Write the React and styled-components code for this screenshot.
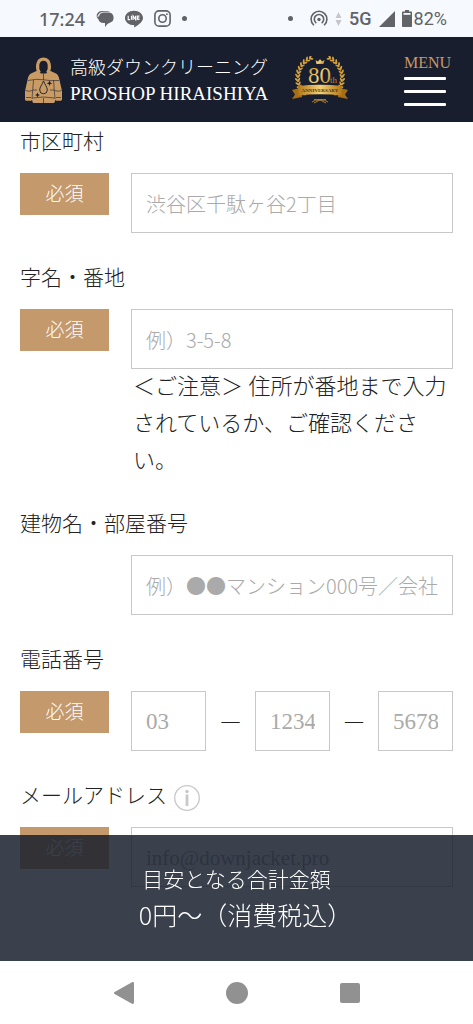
import React from "react";
import styled, { createGlobalStyle } from "styled-components";

const serif = `"Liberation Serif", "Noto Sans CJK JP", serif`;
const gothic = `"Noto Sans CJK JP", sans-serif`;
const navy = "#181e2d";
const tan = "#c4996c";

const GlobalStyle = createGlobalStyle`
  *, *::before, *::after { box-sizing: border-box; }
  body {
    margin: 0;
    background: #fff;
    color: #222;
    font-family: ${serif};
    font-weight: 300;
  }
`;

const Page = styled.div`
  min-height: 100vh;
  display: flex;
  flex-direction: column;
`;

const StatusBar = styled.div`
  height: 37px;
  padding: 0 26px 0 39px;
  display: flex;
  align-items: center;
  justify-content: space-between;
  background: #f6f9fe;
  color: #626366;
  font-family: "Noto Sans", sans-serif;
  font-weight: 500;
  font-size: 18px;
  line-height: 24px;
`;

const StatusGroup = styled.div`
  display: flex;
  align-items: center;
  gap: ${(p) => p.$gap}px;
  svg { display: block; }
`;

const Network = styled.span`
  font-family: Roboto, sans-serif;
  font-weight: 500;
`;

const Battery = styled.span`
  display: flex;
  align-items: center;
  gap: 2px;
  font-family: Roboto, sans-serif;
  font-weight: 400;
`;

const Dot = styled.span`
  width: 5px;
  height: 5px;
  margin-right: ${(p) => p.$after || 0}px;
  border-radius: 50%;
  background: currentColor;
`;

const Header = styled.header`
  height: 85px;
  padding: 0 22px 0 24px;
  display: flex;
  align-items: center;
  justify-content: space-between;
  background: ${navy};
`;

const Brand = styled.a`
  display: flex;
  align-items: center;
  gap: 7px;
  color: #fff;
  text-decoration: none;
  white-space: nowrap;
  svg { display: block; }
`;

const BrandText = styled.span`
  padding-top: 2px;
  display: flex;
  flex-direction: column;
`;

const BrandLine = styled.span`
  font-size: ${(p) => p.$size}px;
  line-height: 26px;
`;

const BrandGroup = styled.div`
  display: flex;
  align-items: center;
  gap: 24px;
  svg { display: block; }
`;

const MenuButton = styled.button`
  width: 47px;
  padding: 0;
  border: 0;
  background: none;
  color: ${tan};
  font-family: ${serif};
  font-size: 16px;
  line-height: 20px;
  text-align: left;
  display: flex;
  flex-direction: column;
  gap: 10px;
`;

const MenuLine = styled.span`
  width: 42px;
  height: 3px;
  border-radius: 1px;
  background: #fff;
`;

const MenuLabel = styled.span`
  height: 14px;
`;

const Form = styled.form`
  padding: 2px 20px 0;
  display: flex;
  flex-direction: column;
  gap: 27px;
`;

const Field = styled.div`
  display: flex;
  flex-direction: column;
  gap: 13px;
`;

const LabelRow = styled.div`
  height: 36px;
  display: flex;
  align-items: center;
  gap: 7px;
  font-size: 21px;
  line-height: 36px;
`;

const FieldBody = styled.div`
  display: grid;
  grid-template-columns: 89px minmax(0, 1fr);
  column-gap: 22px;
  align-items: start;
`;

const Required = styled.span`
  height: 42px;
  background: ${tan};
  color: #fff;
  font-size: 19px;
  line-height: 43px;
  text-align: center;
`;

const Control = styled.div`
  grid-column: 2;
`;

const TextInput = styled.input`
  display: block;
  width: 100%;
  height: 60px;
  padding: ${(p) => (p.$gothic ? 0 : 2)}px 14px 0;
  border: 1px solid #c8c8c8;
  border-radius: 0;
  background: #fff;
  font-family: ${(p) => (p.$gothic ? gothic : serif)};
  font-weight: 300;
  font-size: ${(p) => p.$size || 20}px;
  color: #222;
  &::placeholder { color: #aaa; opacity: 1; }
`;

const Note = styled.p`
  margin: -1px 0 0;
  padding-left: 2px;
  font-size: 22px;
  line-height: 37px;
`;

const PhoneRow = styled.div`
  display: grid;
  grid-template-columns: 75fr 49fr 75fr 48fr 75fr;
  align-items: center;
  text-align: center;
  font-size: 18px;
`;

const InfoButton = styled.button`
  width: 26px;
  height: 26px;
  margin-top: 4px;
  padding: 0;
  border: 0;
  background: none;
  svg { display: block; }
`;

const BottomDock = styled.div`
  position: fixed;
  left: 0;
  right: 0;
  bottom: 0;
`;

const TotalBar = styled.div`
  padding: 25px 0 29px;
  background: rgba(24, 30, 45, 0.85);
  color: #fff;
  text-align: center;
  font-family: ${gothic};
`;

const TotalLabel = styled.div`
  font-size: 21px;
  line-height: 36px;
`;

const TotalPrice = styled.div`
  padding-left: 18px;
  font-size: 25px;
  line-height: 36px;
`;

const SystemNav = styled.nav`
  height: 63px;
  display: flex;
  align-items: center;
  justify-content: center;
  gap: 89px;
  background: #fff;
`;

const NavButton = styled.button`
  width: 24px;
  height: 24px;
  padding: 0;
  border: 0;
  background: none;
  color: #919191;
  svg { display: block; }
`;

function ChatIcon() {
  return (
    <svg width="18" height="18" viewBox="0 0 18 18" fill="currentColor" aria-hidden="true">
      <path d="M.5 5.800C1 2.700 3 1 6 1h5c1.200 0 2.200.3 3 .8H8C4.800 1.800 2.600 3.300 2 5.800Z" />
      <path d="M8 2.600h4.500a5.200 5.200 0 0 1 .9 10.300C11.700 13.400 10.200 14.700 9 17.200V13H7.500C4.600 13 3 11.500 2.500 9.500L.3 6.500H3C3.500 4.200 5.200 2.600 8 2.600Z" />
    </svg>
  );
}

function LineIcon() {
  return (
    <svg width="18" height="18" viewBox="0 0 18 18" aria-hidden="true">
      <path fill="currentColor" d="M9 .7c5 0 9 3.200 9 7.200 0 3.500-4 6.600-8.500 9.400-.6.300-.5-.200-.4-.7l.1-1.500C4 15.100 0 12 0 7.900 0 3.900 4 .7 9 .7Z" />
      <path fill="none" stroke="#f6f9fe" strokeWidth="1.200" d="M3.200 5.700v4h2M6.500 5.700v4M8.100 9.900V5.900l2.500 3.600V5.700M14.500 6.200h-2.200v3.300h2.200M12.300 7.800h2" />
    </svg>
  );
}

function InstagramIcon() {
  return (
    <svg width="17" height="17" viewBox="0 0 17 17" fill="none" stroke="currentColor" strokeWidth="1.600" aria-hidden="true">
      <rect x=".9" y=".9" width="15.200" height="15.200" rx="4.200" />
      <circle cx="8.500" cy="8.500" r="3.700" />
      <circle cx="12.900" cy="4.200" r=".9" fill="currentColor" stroke="none" />
    </svg>
  );
}

function HotspotIcon() {
  return (
    <svg width="18" height="18" viewBox="0 0 18 18" fill="none" stroke="currentColor" strokeWidth="1.600" strokeLinecap="round" aria-hidden="true">
      <path d="M3.500 14.800A7.900 7.900 0 1 1 14.500 14.800" />
      <path d="M5.800 12.600A4.700 4.700 0 1 1 12.200 12.600" />
      <circle cx="9" cy="9.500" r="1.700" fill="currentColor" stroke="none" />
    </svg>
  );
}

function DataIcon() {
  return (
    <svg width="7" height="16" viewBox="0 0 7 16" fill="#c4c6ca" aria-hidden="true">
      <path d="M3.500 1 6.500 7h-6ZM3.500 15 .5 9h6Z" />
    </svg>
  );
}

function SignalIcon() {
  return (
    <svg width="16" height="16" viewBox="0 0 16 16" fill="currentColor" aria-hidden="true">
      <path d="M16 0v16H0Z" />
    </svg>
  );
}

function BatteryIcon() {
  return (
    <svg width="10" height="17" viewBox="0 0 10 17" aria-hidden="true">
      <path fill="currentColor" d="M3 0h4v1.500h2c.6 0 1 .4 1 1V16c0 .6-.4 1-1 1H1c-.6 0-1-.4-1-1V2.500c0-.6.4-1 1-1h2Z" />
      <path fill="#f6f9fe" d="M1.500 3h7v1.800h-7Z" />
    </svg>
  );
}

function JacketLogo() {
  return (
    <svg width="39" height="46" viewBox="0 0 39 46" aria-hidden="true">
      <path fill="none" stroke="#c99b65" strokeWidth="3.200" d="M15.500 16C12.500 12 12.500 2.200 19.500 2.200S26.500 12 23.500 16" />
      <path fill="#c99b65" d="M13 13.800 17 16.500h5l4-2.700 5 2.200c3 1 4 4 4.600 7.500L38 34v8c0 1.200-.6 1.800-1.600 1.800h-3.600c-1 0-1.500-.4-1.500-1.300l-.4 2c-.2.900-.7 1.500-1.600 1.500H10c-.9 0-1.400-.6-1.600-1.500l-.4-2c0 .900-.5 1.300-1.500 1.300H2.700C1.600 43.800 1 43.200 1 42v-8l2.400-10.500C4 20 5 17 8 16Z" />
      <g fill="none" stroke={navy} strokeWidth=".6">
        <path d="M19.500 16.500V23M19.500 41v5M9.500 23 8 42M29.500 23 31 42M4 23.500q8-2 15.500-.7t15.500.7M1.500 33.500q3 1.500 7 0M30.500 33.500q4 1.500 7 0M9 33h4M26 33h4M8.500 41q11-2 22 0M2 40.500h5M32 40.500h5" />
        <path fill="#c99b65" strokeWidth=".9" d="M19.500 24C18 28 15.700 30 15.700 33a3.800 3.800 0 0 0 7.600 0C23.300 30 21 28 19.500 24Z" />
      </g>
      <path fill={navy} d="m25.500 23.500.8 2 2 .8-2 .8-.8 2-.8-2-2-.8 2-.8ZM13.500 35.500l.7 1.800 1.800.7-1.800.7-.7 1.800-.7-1.800-1.800-.7 1.800-.7Z" />
    </svg>
  );
}

const leaves = Array.from({ length: 12 }, (_, i) => {
  const degrees = -62 + i * 10;
  const t = (degrees * Math.PI) / 180;
  return { x: 28 + 22 * Math.cos(t), y: 22 + 22 * Math.sin(t), a: degrees };
});

function AnniversaryEmblem() {
  return (
    <svg width="56" height="48" viewBox="0 0 56 48" role="img" aria-label="80th Anniversary">
      <defs>
        <linearGradient id="gold" x1="0" y1="0" x2="1" y2="1">
          <stop offset="0" stopColor="#c58a25" />
          <stop offset=".5" stopColor="#f3d279" />
          <stop offset="1" stopColor="#b87818" />
        </linearGradient>
        <linearGradient id="ribbon" x1="0" y1="0" x2="1" y2="0">
          <stop offset="0" stopColor="#b27718" />
          <stop offset=".5" stopColor="#f4d075" />
          <stop offset="1" stopColor="#b27718" />
        </linearGradient>
      </defs>
      {[1, -1].map((side) => (
        <g key={side} transform={side === 1 ? undefined : "translate(56 0) scale(-1 1)"} fill="#d5a13c">
          {leaves.map((l) => (
            <g key={l.a} transform={`translate(${l.x} ${l.y}) rotate(${l.a})`}>
              <ellipse cx="1.700" cy="0" rx="2.600" ry="1" transform="rotate(-50)" />
              <ellipse cx="-1.500" cy="0" rx="2.300" ry=".9" transform="rotate(55)" />
            </g>
          ))}
          <path d="M22 47q5-4 12-3.500M28 43.500q5 0 8 2.500" stroke="#ba8a32" strokeWidth=".9" fill="none" />
        </g>
      ))}
      <path fill="url(#gold)" d="m23.500 4 2.500 1.500L28 3l2 2.500L32.500 4l-1 4h-7Z" />
      <text x="16" y="27" fontFamily="Liberation Serif, serif" fontWeight="400" fontSize="23" fill="url(#gold)">80</text>
      <text x="38" y="27" fontFamily="Liberation Serif, serif" fontSize="9" fill="#b98a3e">th</text>
      <path fill="#a76d14" d="M0 34 10 31.500V41L0 43l3-4.500ZM56 34l-10-2.500V41l10 2-3-4.500Z" />
      <path fill="url(#ribbon)" d="M6 30q22-2.500 44 0v9.500q-22-2.500-44 0Z" />
      <text x="28" y="36" textAnchor="middle" fontFamily="Liberation Serif, serif" fontWeight="700" fontSize="5" fill="#4b3210">ANNIVERSARY</text>
    </svg>
  );
}

function InfoIcon() {
  return (
    <svg width="26" height="26" viewBox="0 0 26 26" aria-hidden="true">
      <circle cx="13" cy="13" r="12.300" fill="none" stroke="#c8c8c8" strokeWidth="1.300" />
      <circle cx="13" cy="6.500" r="1.700" fill="#c8c8c8" />
      <path d="M13 9.500V21" stroke="#c8c8c8" strokeWidth="2.800" />
    </svg>
  );
}

function FormField({ id, label, required, extra, children }) {
  return (
    <Field>
      <LabelRow>
        <label htmlFor={id}>{label}</label>
        {extra}
      </LabelRow>
      <FieldBody>
        {required && <Required>必須</Required>}
        <Control>{children}</Control>
      </FieldBody>
    </Field>
  );
}

export default function App() {
  return (
    <Page lang="ja">
      <GlobalStyle />
      <StatusBar>
        <StatusGroup $gap={11}>
          <span>17:24</span>
          <ChatIcon />
          <LineIcon />
          <InstagramIcon />
          <Dot />
        </StatusGroup>
        <StatusGroup $gap={7}>
          <Dot $after={10} />
          <HotspotIcon />
          <DataIcon />
          <Network>5G</Network>
          <SignalIcon />
          <Battery>
            <BatteryIcon />
            82%
          </Battery>
        </StatusGroup>
      </StatusBar>

      <Header>
        <BrandGroup>
          <Brand href="#">
            <JacketLogo />
            <BrandText>
              <BrandLine $size={18}>高級ダウンクリーニング</BrandLine>
              <BrandLine $size={19}>PROSHOP HIRAISHIYA</BrandLine>
            </BrandText>
          </Brand>
          <AnniversaryEmblem />
        </BrandGroup>
        <MenuButton type="button">
          <MenuLabel>MENU</MenuLabel>
          <MenuLine />
          <MenuLine />
          <MenuLine />
        </MenuButton>
      </Header>

      <Form>
        <FormField id="city" label="市区町村" required>
          <TextInput id="city" placeholder="渋谷区千駄ヶ谷2丁目" $gothic />
        </FormField>
        <FormField id="street" label="字名・番地" required>
          <TextInput id="street" placeholder="例）3-5-8" $gothic />
          <Note>＜ご注意＞ 住所が番地まで入力されているか、ご確認ください。</Note>
        </FormField>
        <FormField id="building" label="建物名・部屋番号">
          <TextInput id="building" placeholder="例）●●マンション000号／会社" $gothic />
        </FormField>
        <FormField id="tel1" label="電話番号" required>
          <PhoneRow>
            <TextInput id="tel1" type="tel" placeholder="03" $size={23} />
            <span>—</span>
            <TextInput type="tel" aria-label="電話番号 2" placeholder="1234" $size={23} />
            <span>—</span>
            <TextInput type="tel" aria-label="電話番号 3" placeholder="5678" $size={23} />
          </PhoneRow>
        </FormField>
        <FormField
          id="email"
          label="メールアドレス"
          required
          extra={
            <InfoButton type="button" aria-label="メールアドレスについて">
              <InfoIcon />
            </InfoButton>
          }
        >
          <TextInput id="email" type="email" placeholder="info@downjacket.pro" $size={21} />
        </FormField>
      </Form>

      <BottomDock>
        <TotalBar>
          <TotalLabel>目安となる合計金額</TotalLabel>
          <TotalPrice>0円～（消費税込）</TotalPrice>
        </TotalBar>
        <SystemNav aria-label="システム">
          <NavButton type="button" aria-label="戻る">
            <svg width="24" height="24" viewBox="0 0 24 24" fill="currentColor">
              <path d="M2.600 11 20 1.300c1-.5 2 0 2 1.200v19c0 1.200-1 1.700-2 1.200L2.600 13c-.8-.5-.8-1.500 0-2Z" />
            </svg>
          </NavButton>
          <NavButton type="button" aria-label="ホーム">
            <svg width="24" height="24" viewBox="0 0 24 24" fill="currentColor">
              <circle cx="12" cy="12" r="11" />
            </svg>
          </NavButton>
          <NavButton type="button" aria-label="履歴">
            <svg width="24" height="24" viewBox="0 0 24 24" fill="currentColor">
              <rect x="2" y="2" width="20" height="20" rx="2" />
            </svg>
          </NavButton>
        </SystemNav>
      </BottomDock>
    </Page>
  );
}
